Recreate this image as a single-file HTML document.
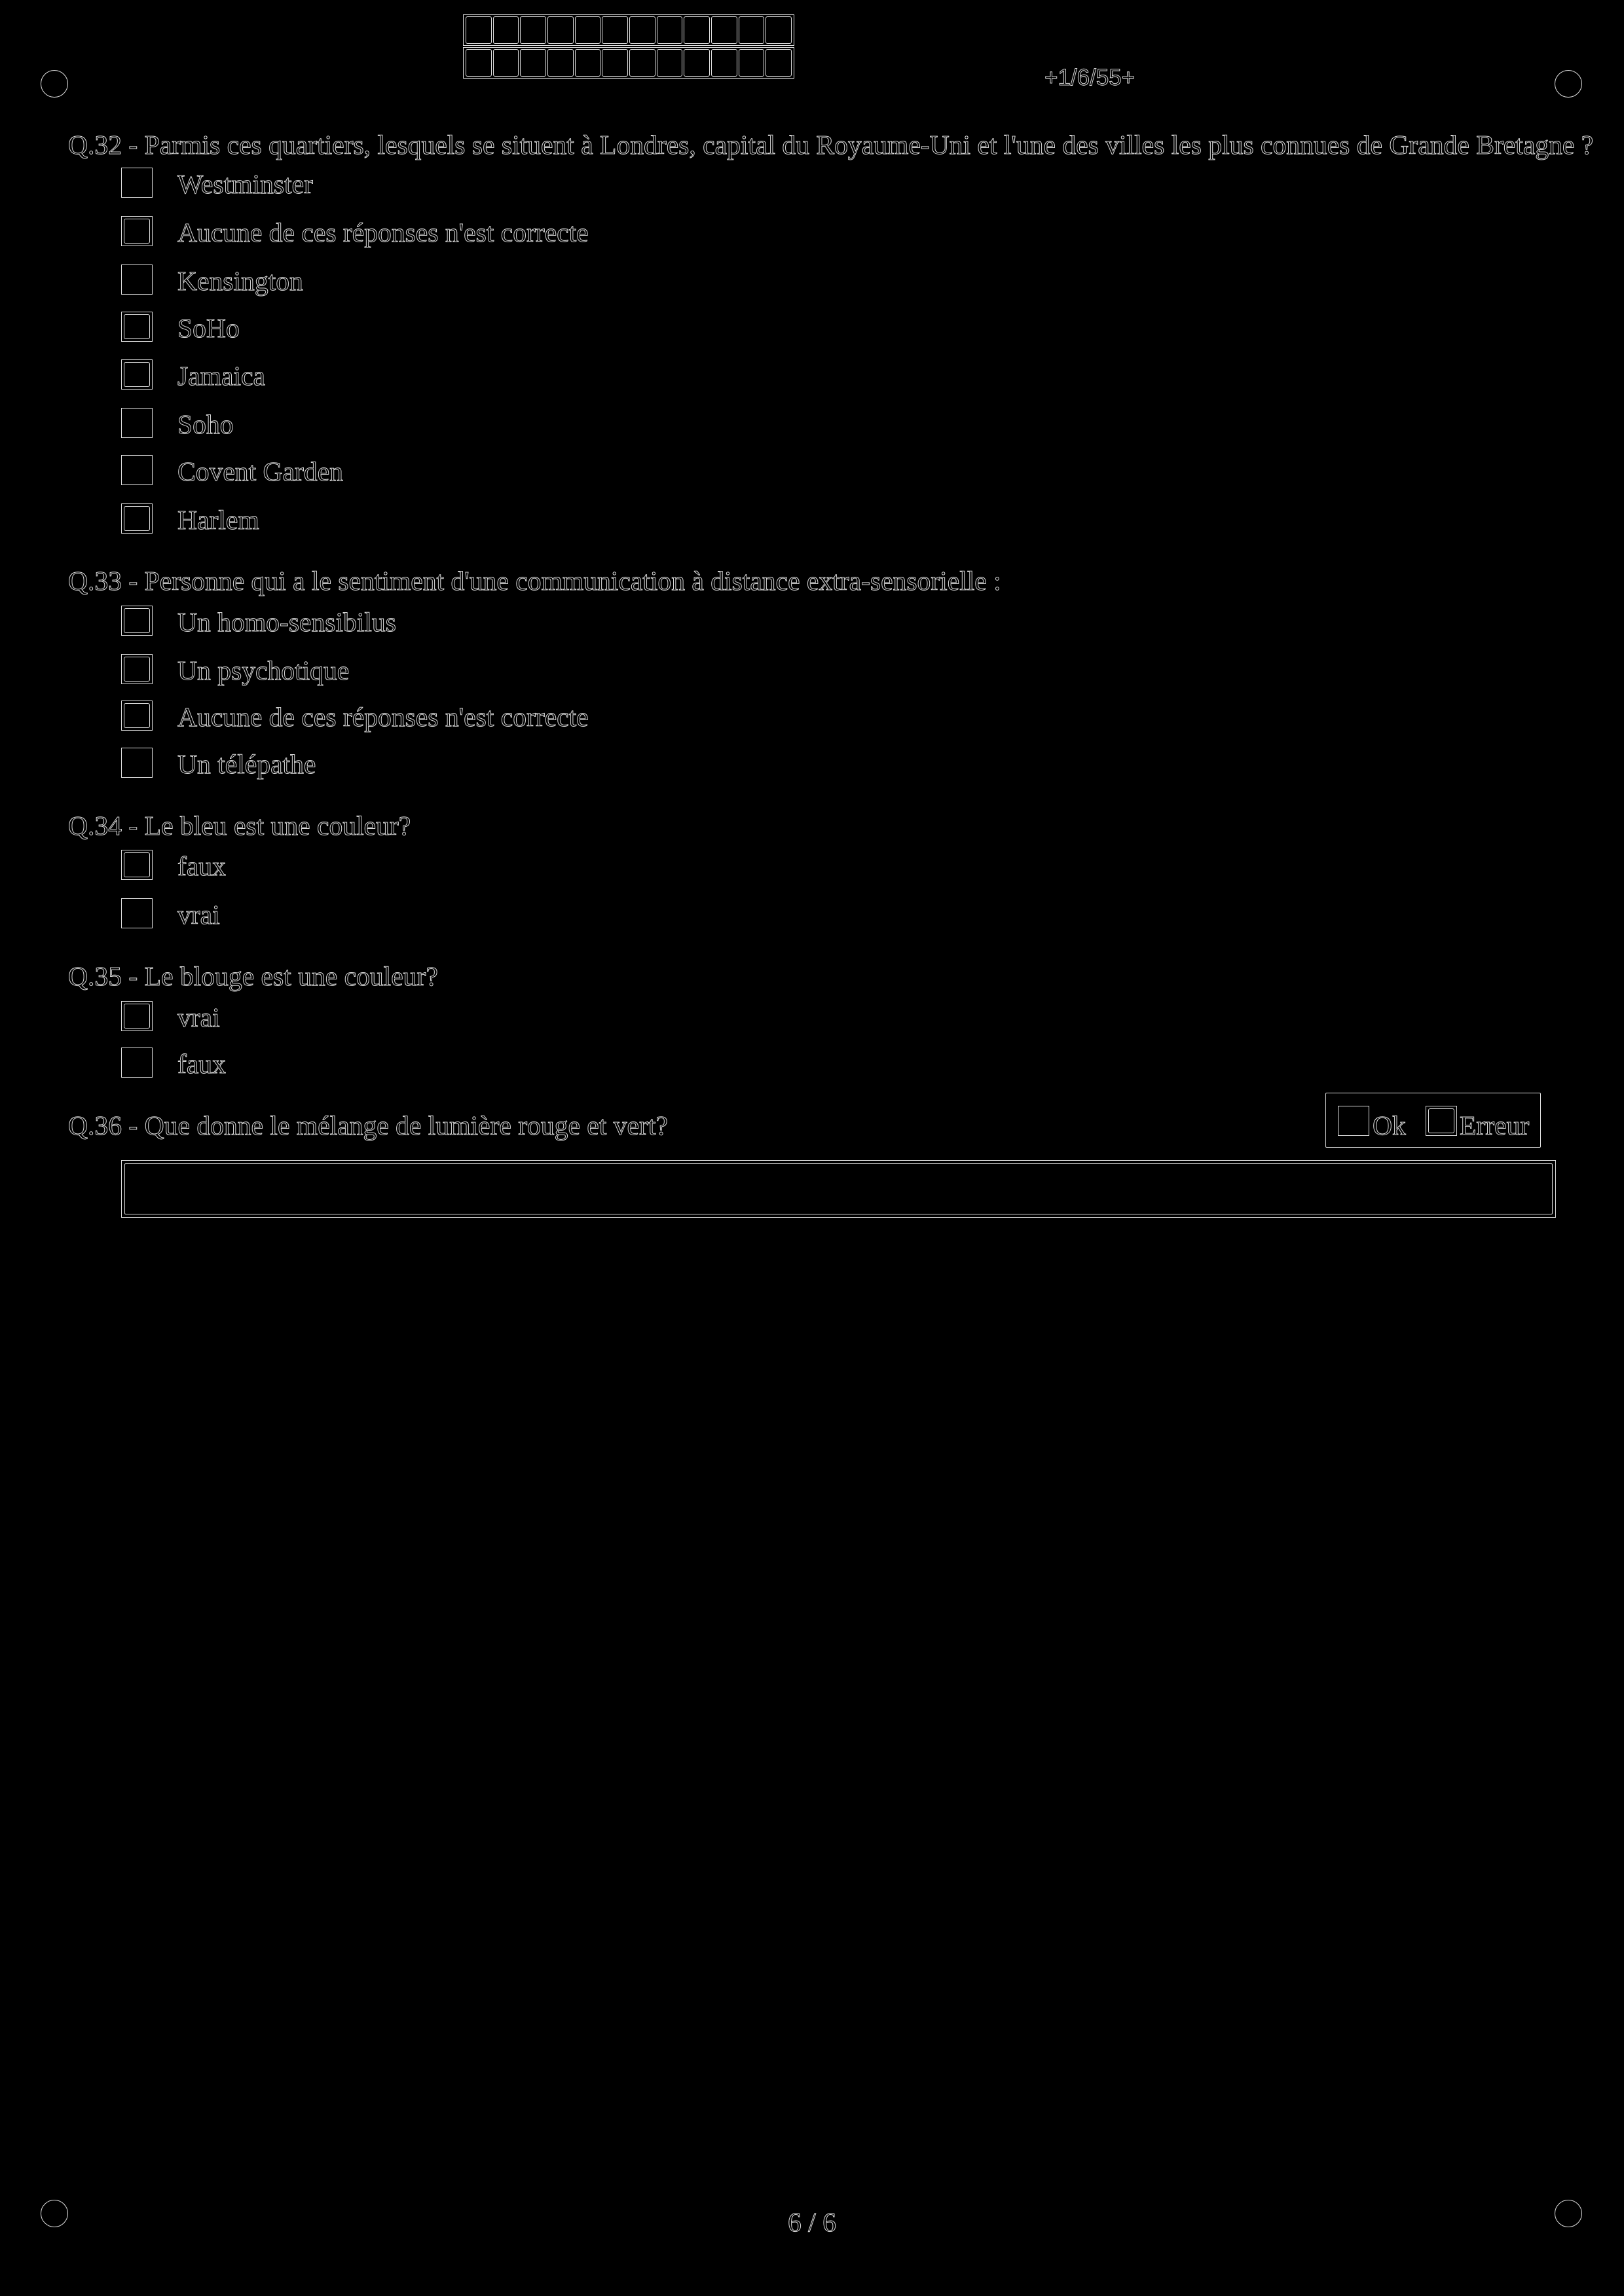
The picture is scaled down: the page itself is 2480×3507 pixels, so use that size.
<!DOCTYPE html>
<html><head><meta charset="utf-8"><style>
html,body{margin:0;padding:0;background:#000;}
body{width:2480px;height:3507px;position:relative;overflow:hidden;font-family:"Liberation Serif",serif;}
.t{position:absolute;font-size:41.6px;line-height:46px;white-space:nowrap;color:transparent;-webkit-text-stroke:1px #d8d8d8;margin-top:2px;}
.b{position:absolute;width:46px;height:44px;border:1.5px solid #e0e0e0;}
.d::after{content:"";position:absolute;left:3px;top:3px;right:3px;bottom:3px;border:1.5px solid #e0e0e0;border-radius:3px;}
.c{position:absolute;width:40px;height:40px;border:1.5px solid #e0e0e0;border-radius:50%;}
.g{position:absolute;left:707px;width:500px;height:42px;border:1.5px solid #e0e0e0;display:flex;padding:2px;box-sizing:content-box;}
.g i{flex:1;border:1.5px solid #e0e0e0;border-radius:3px;margin:0 1px;}
</style></head><body>
<div class="c" style="left:62px;top:107px"></div>
<div class="c" style="left:2374px;top:107px"></div>
<div class="c" style="left:62px;top:3360px"></div>
<div class="c" style="left:2374px;top:3360px"></div>
<div class="g" style="top:22px"><i></i><i></i><i></i><i></i><i></i><i></i><i></i><i></i><i></i><i></i><i></i><i></i></div>
<div class="g" style="top:72px"><i></i><i></i><i></i><i></i><i></i><i></i><i></i><i></i><i></i><i></i><i></i><i></i></div>
<div class="t" style="left:1595px;top:94px;font-family:'Liberation Sans',sans-serif;font-size:35px;font-weight:normal;">+1/6/55+</div>
<div class="t" style="left:1203px;top:3369px;font-family:'Liberation Serif',serif;">6 / 6</div>

<div class="t" style="left:104px;top:196px;">Q.32 - Parmis ces quartiers, lesquels se situent à Londres, capital du Royaume-Uni et l'une des villes les plus connues de Grande Bretagne ?</div>
<div class="b" style="left:185px;top:256px"></div><div class="t" style="left:271px;top:256px">Westminster</div>
<div class="b d" style="left:185px;top:330px"></div><div class="t" style="left:271px;top:330px">Aucune de ces réponses n'est correcte</div>
<div class="b" style="left:185px;top:404px"></div><div class="t" style="left:271px;top:404px">Kensington</div>
<div class="b d" style="left:185px;top:476px"></div><div class="t" style="left:271px;top:476px">SoHo</div>
<div class="b d" style="left:185px;top:549px"></div><div class="t" style="left:271px;top:549px">Jamaica</div>
<div class="b" style="left:185px;top:623px"></div><div class="t" style="left:271px;top:623px">Soho</div>
<div class="b" style="left:185px;top:695px"></div><div class="t" style="left:271px;top:695px">Covent Garden</div>
<div class="b d" style="left:185px;top:769px"></div><div class="t" style="left:271px;top:769px">Harlem</div>

<div class="t" style="left:104px;top:862px;">Q.33 - Personne qui a le sentiment d'une communication à distance extra-sensorielle :</div>
<div class="b d" style="left:185px;top:925px"></div><div class="t" style="left:271px;top:925px">Un homo-sensibilus</div>
<div class="b d" style="left:185px;top:999px"></div><div class="t" style="left:271px;top:999px">Un psychotique</div>
<div class="b d" style="left:185px;top:1070px"></div><div class="t" style="left:271px;top:1070px">Aucune de ces réponses n'est correcte</div>
<div class="b" style="left:185px;top:1142px"></div><div class="t" style="left:271px;top:1142px">Un télépathe</div>

<div class="t" style="left:104px;top:1236px;">Q.34 - Le bleu est une couleur?</div>
<div class="b d" style="left:185px;top:1298px"></div><div class="t" style="left:271px;top:1298px">faux</div>
<div class="b" style="left:185px;top:1372px"></div><div class="t" style="left:271px;top:1372px">vrai</div>

<div class="t" style="left:104px;top:1466px;">Q.35 - Le blouge est une couleur?</div>
<div class="b d" style="left:185px;top:1529px"></div><div class="t" style="left:271px;top:1529px">vrai</div>
<div class="b" style="left:185px;top:1600px"></div><div class="t" style="left:271px;top:1600px">faux</div>

<div class="t" style="left:104px;top:1694px;">Q.36 - Que donne le mélange de lumière rouge et vert?</div>
<div style="position:absolute;left:2024px;top:1669px;width:327px;height:82px;border:1.5px solid #e0e0e0;border-radius:2px;"></div>
<div class="b" style="left:2043px;top:1689px"></div><div class="t" style="left:2096px;top:1694px">Ok</div>
<div class="b d" style="left:2177px;top:1689px"></div><div class="t" style="left:2229px;top:1694px">Erreur</div>
<div style="position:absolute;left:185px;top:1772px;width:2189px;height:86px;border:1.5px solid #e0e0e0;"></div>
<div style="position:absolute;left:190px;top:1777px;width:2179px;height:76px;border:1.5px solid #e0e0e0;border-radius:2px;"></div>
</body></html>
